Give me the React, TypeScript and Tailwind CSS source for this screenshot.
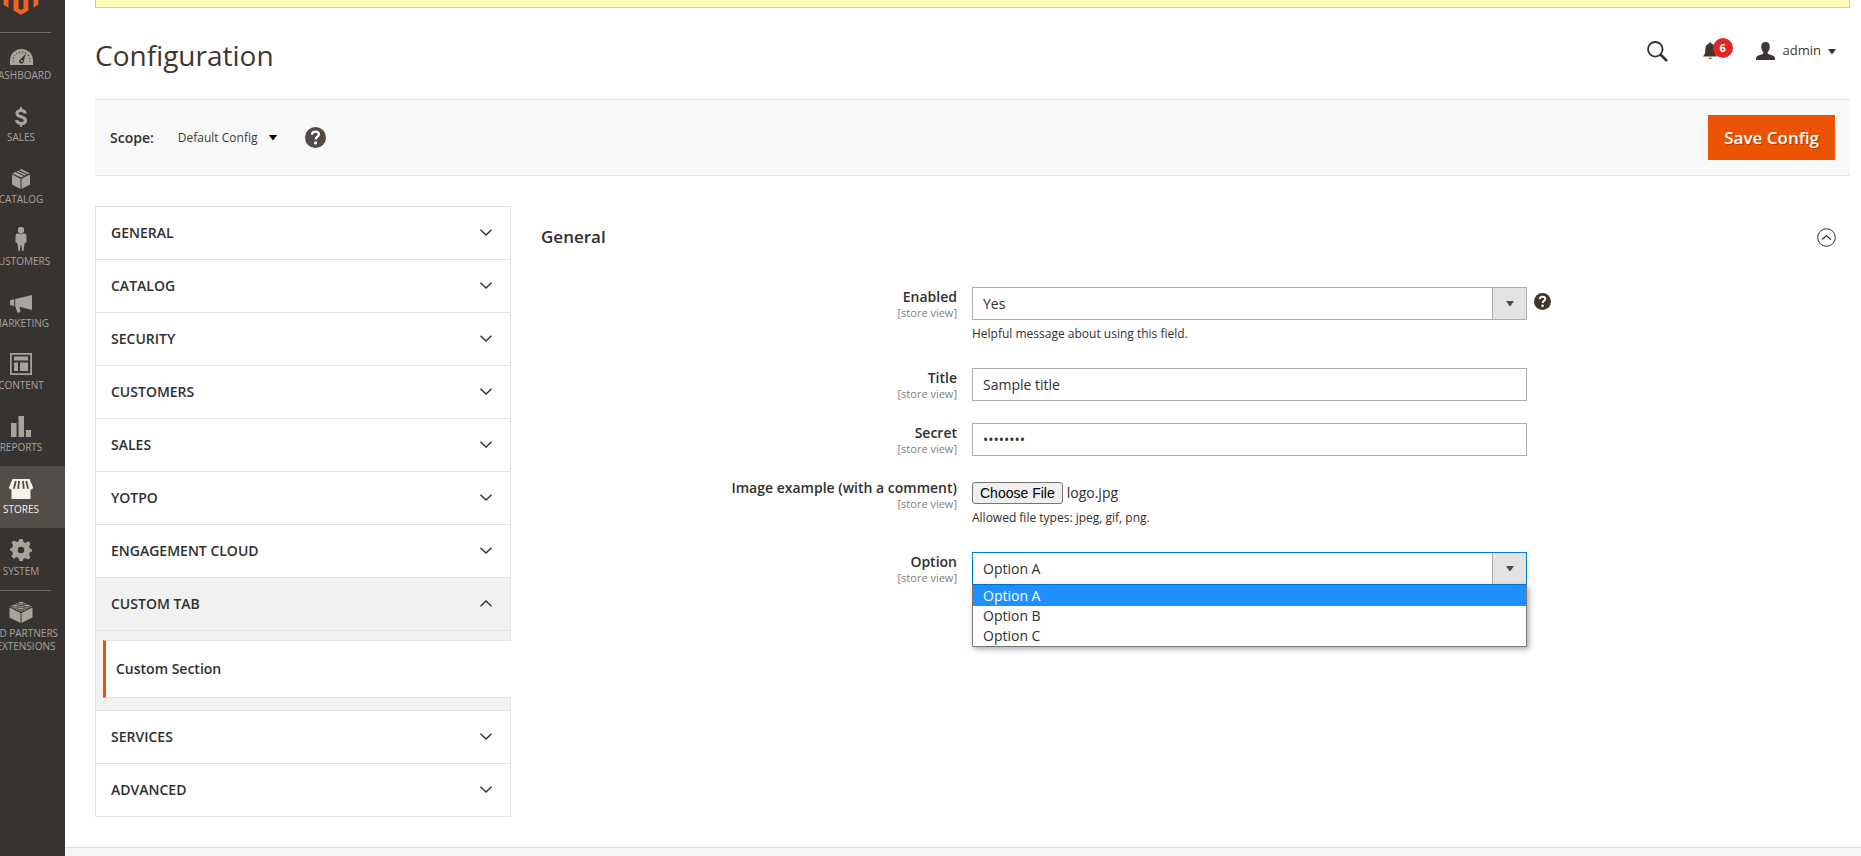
import { useRef } from 'react';
import type { ReactNode } from 'react';

const MENU: { label: string; icon: ReactNode; active?: boolean; divided?: boolean }[] = [
  {
    label: 'Dashboard',
    divided: true,
    icon: (
      <svg width="23" height="16" viewBox="0 0 23 16" fill="currentColor">
        <path d="M0 16v-4.500a11.500 11.500 0 0 1 23 0V16z" />
        <path d="M3.200 12.500A8.500 8.500 0 0 1 5 6.200M6.300 4.800A8.500 8.500 0 0 1 16.700 4.800M18 6.200a8.500 8.500 0 0 1 1.800 6.300" fill="none" stroke="#373330" strokeWidth="1.100" strokeDasharray="1.100 1.900" />
        <path d="M16 4.500l-2.400 8.300a2.300 2.300 0 1 1-3-2.600z" fill="#373330" />
        <circle cx="11.800" cy="12" r="1" />
      </svg>
    ),
  },
  {
    label: 'Sales',
    icon: (
      <svg width="12" height="20" viewBox="0 0 12 20" fill="none" stroke="currentColor">
        <path d="M6 0v3M6 17v3" strokeWidth="2" />
        <path d="M10.300 6.600C10 4.500 8.500 3.500 6.100 3.500 3.600 3.500 2 4.600 2 6.500c0 4.300 8.500 2.300 8.500 6.800 0 2-1.700 3.200-4.300 3.200-2.700 0-4.300-1.200-4.600-3.400" strokeWidth="3.200" />
      </svg>
    ),
  },
  {
    label: 'Catalog',
    icon: (
      <svg width="18" height="20" viewBox="0 0 18 20" fill="currentColor">
        <path d="M0 5.600l8.500 4.200V20L0 15.400zM18 5.600L9.500 9.800V20l8.500-4.600z" />
        <path d="M.4 4.600L3.300 3.100l8.500 4L9 8.600zM4.300 2.600L6 1.700l8.500 4-1.700.9zM7.100 1.100L9.200 0l8.500 4.200-2.100 1z" />
      </svg>
    ),
  },
  {
    label: 'Customers',
    icon: (
      <svg width="12" height="24" viewBox="0 0 12 24" fill="currentColor">
        <circle cx="6" cy="3" r="3.200" />
        <path d="M2.500 6.500h7Q11.500 6.800 11.500 9v6l-2 1.500L8.500 24H7.200L6.400 18h-.8L4.800 24H3.500l-1-7.500-2-1.500V9q0-2.200 2-2.500z" />
      </svg>
    ),
  },
  {
    label: 'Marketing',
    icon: (
      <svg width="22" height="18" viewBox="0 0 22 18" fill="currentColor">
        <path d="M22 0v15L9.500 11.800 10.600 17 7.700 18 5.200 11.300V4z" />
        <path d="M0 5.200l4.200-1v7L0 10z" />
      </svg>
    ),
  },
  {
    label: 'Content',
    icon: (
      <svg width="22" height="22" viewBox="0 0 22 22" fill="currentColor">
        <path fillRule="evenodd" d="M0 0h22v22H0zM1.700 1.700v18.600h18.600V1.700z" />
        <path d="M4 3.500h14v4H4zM4 9.500h4V18H4zM10 9.500h8V18h-8z" />
      </svg>
    ),
  },
  {
    label: 'Reports',
    icon: (
      <svg width="20" height="21" viewBox="0 0 20 21" fill="currentColor">
        <path d="M0 7h5.500v14H0zM7.500 0H13v21H7.500zM14.800 14H20v7h-5.200z" />
      </svg>
    ),
  },
  {
    label: 'Stores',
    active: true,
    icon: (
      <svg width="24" height="20" viewBox="0 0 24 20" fill="currentColor">
        <path d="M2.500 10h19v10h-19z" />
        <path d="M3.500 0h17L24 8.200Q23.800 10.600 22 10.600H2Q.2 10.600 0 8.200z" />
        <path d="M6.800 2L4.900 9.800M10 2l-.8 7.800M14 2l.8 7.800M17.200 2l1.900 7.800" stroke="#524d49" strokeWidth="1.800" />
      </svg>
    ),
  },
  {
    label: 'System',
    icon: (
      <svg width="22" height="22" viewBox="-11 -11 22 22" fill="currentColor">
        <path
          fillRule="evenodd"
          d="M-1.600-11h3.200l.9 3.100 1.900.8 2.900-1.600 2.300 2.300-1.600 2.900.8 1.900 2.100.9v2.200l-2.200 1-.8 1.900 1.600 2.900-2.300 2.300-2.900-1.600-1.900.8L1.600 11h-3.200l-.9-3.100-1.900-.8-2.900 1.600-2.300-2.300 1.600-2.900-.8-1.900-2.100-1v-2.200l2.200-.9.800-1.900-1.600-2.900 2.300-2.300 2.900 1.600 1.900-.8zM0-3.300a3.300 3.300 0 1 0 0 6.600 3.300 3.300 0 0 0 0-6.600z"
        />
      </svg>
    ),
  },
  {
    label: 'Find Partners & Extensions',
    divided: true,
    icon: (
      <svg width="24" height="22" viewBox="0 0 24 22" fill="currentColor">
        <path d="M.5 6.500L11.500 12v10L.5 16.500zM23.500 6.500L12.500 12v10l11-5.500z" />
        <path d="M12 .5l11 5L12 11 1 5.500z" />
        <g stroke="#373330" strokeWidth=".8">
          <path d="M9 1.800v1.600c0 1.600 6 1.600 6 0V1.800M3 4.600v1.600c0 1.600 6 1.600 6 0V4.600M15 4.600v1.600c0 1.600 6 1.600 6 0V4.600M9 7.400V9c0 1.600 6 1.600 6 0V7.400" />
          <ellipse cx="12" cy="1.800" rx="3" ry="1.400" />
          <ellipse cx="6" cy="4.600" rx="3" ry="1.400" />
          <ellipse cx="18" cy="4.600" rx="3" ry="1.400" />
          <ellipse cx="12" cy="7.400" rx="3" ry="1.400" />
        </g>
      </svg>
    ),
  },
];

const TABS = [
  { title: 'General' },
  { title: 'Catalog' },
  { title: 'Security' },
  { title: 'Customers' },
  { title: 'Sales' },
  { title: 'Yotpo' },
  { title: 'Engagement Cloud' },
  { title: 'Custom Tab', sections: ['Custom Section'] },
  { title: 'Services' },
  { title: 'Advanced' },
];

const OPTIONS = ['Option A', 'Option B', 'Option C'];

function Chevron({ up }: { up?: boolean }) {
  return (
    <svg width="12" height="7" viewBox="0 0 12 7" fill="none" stroke="#303030" strokeWidth="1.400">
      <path d={up ? 'M.5 6.300L6 1l5.500 5.300' : 'M.5.7L6 6 11.500.7'} />
    </svg>
  );
}

function Caret({ color = '#41362f' }: { color?: string }) {
  return (
    <svg width="8" height="5" viewBox="0 0 8 5" fill={color} className="shrink-0">
      <path d="M0 0h8L4.800 4.600a1 1 0 0 1-1.600 0z" />
    </svg>
  );
}

function HelpIcon({ size, color }: { size: number; color: string }) {
  return (
    <svg width={size} height={size} viewBox="0 0 21 21">
      <circle cx="10.500" cy="10.500" r="10.500" fill={color} />
      <path d="M7 7.600C7.100 5.600 8.500 4.600 10.500 4.600s3.400 1 3.400 2.700c0 2.300-3.200 2.400-3.200 5.200" fill="none" stroke="#fff" strokeWidth="2.400" />
      <circle cx="10.600" cy="15.900" r="1.600" fill="#fff" />
    </svg>
  );
}

function Sidebar() {
  return (
    <nav className="w-[65px] shrink-0 overflow-hidden bg-[#373330] text-[#a8a39d]">
      <div className="-ml-[23px] w-[88px]">
        <a href="#" aria-label="Magento" className="flex h-8 justify-center">
          <svg width="36" height="15" viewBox="0 0 36 15" fill="#f26322">
            <path d="M.7 0h4.800v7.600L.7 5zM30.500 0h4.800v5l-4.800 2.600zM10.600 0h4.900v8.600l2.500 1.300 2.500-1.300V0h4.900v10.600L18 14.800l-7.400-4.200z" />
          </svg>
        </a>
        <ul>
          {MENU.map((m) => (
            <li key={m.label} className="relative">
              {m.divided && <span className="absolute top-0 right-[14px] left-[14px] h-px bg-[#736963]" />}
              <a
                href="#"
                className={`flex min-h-[62px] flex-col items-center ${m.active ? 'bg-[#524d49] text-[#f7f3eb]' : ''}`}
              >
                <span className="flex h-[33px] items-end">{m.icon}</span>
                <span className="mt-1 max-w-[80px] text-center text-[10px] leading-[13px] uppercase">{m.label}</span>
              </a>
            </li>
          ))}
        </ul>
      </div>
    </nav>
  );
}

function Header() {
  return (
    <header className="flex items-center justify-between pt-[27px] pr-[14px] pb-6">
      <h1 className="text-[28px] leading-10 text-[#41362f]">Configuration</h1>
      <div className="-mt-2 flex items-center">
        <button type="button" aria-label="Search" className="mr-[35px]">
          <svg width="21" height="21" viewBox="0 0 21 21" fill="none" stroke="#303030">
            <circle cx="8.300" cy="8.300" r="7.300" strokeWidth="1.800" />
            <path d="M13.500 13.500l6.500 6.500" strokeWidth="2.500" />
          </svg>
        </button>
        <button type="button" aria-label="Notifications" className="relative mr-[39px]">
          <svg width="14" height="18" viewBox="0 0 14 18" fill="#41362f">
            <path d="M6 1.500a1.200 1.200 0 0 1 2.400 0C11 2.200 11.800 4.500 11.800 8c0 3.400.8 4.500 2.200 6.500H0C1.800 12.500 2.300 11.400 2.300 8 2.300 4.500 3.500 2.200 6 1.500zM5.200 15.800h4c-.4 1.400-3.600 1.400-4 0z" />
          </svg>
          <span className="absolute -top-1 left-[10px] flex size-5 items-center justify-center rounded-full bg-[#e22626] text-[11px] font-bold text-white">
            6
          </span>
        </button>
        <button type="button" className="flex items-center text-[13px] text-[#41362f]">
          <svg width="19" height="18" viewBox="0 0 19 18" fill="#41362f" className="mr-2">
            <path d="M9.500 0c2.900 0 4.300 1.800 4.300 4.600 0 2.400-.8 4.300-2.100 5.400v1.600c1 .9 4 1.500 5.900 2.400 1.100.5 1.400 1.900 1.400 4H0c0-2.100.3-3.500 1.400-4 1.900-.9 4.900-1.500 5.900-2.400V10C6 8.900 5.200 7 5.200 4.600 5.200 1.800 6.600 0 9.500 0z" />
          </svg>
          admin
          <span className="ml-[7px]">
            <Caret />
          </span>
        </button>
      </div>
    </header>
  );
}

function ConfigTabs() {
  return (
    <aside className="w-[416px] shrink-0 border-b border-[#e3e3e3]">
      {TABS.map((t) => (
        <div key={t.title} className={`border-x border-t border-[#e3e3e3] ${t.sections ? 'bg-[#f1f1f1]' : ''}`}>
          <button
            type="button"
            className="flex h-[52px] w-full items-center justify-between pr-[18px] pb-px pl-[15px] text-[14px] font-semibold text-[#303030] uppercase"
          >
            {t.title}
            <Chevron up={!!t.sections} />
          </button>
          {t.sections && (
            <ul className="border-t border-[#e3e3e3] pt-[9px] pb-3">
              {t.sections.map((s) => (
                <li key={s} className="-mr-px ml-[7px]">
                  <a
                    href="#"
                    className="flex h-[58px] items-center border-y border-l-3 border-y-[#e3e3e3] border-l-[#eb5202] bg-white pb-px pl-[10px] text-[14px] font-semibold text-[#303030]"
                  >
                    {s}
                  </a>
                </li>
              ))}
            </ul>
          )}
        </div>
      ))}
    </aside>
  );
}

function Field({ id, label, note, help, children }: { id: string; label: string; note?: string; help?: boolean; children: ReactNode }) {
  return (
    <div className="mb-[22px] grid grid-cols-[416fr_555fr_294fr] gap-x-[15px]">
      <label htmlFor={id} className="pt-px text-right text-[14px] leading-[18px] font-semibold text-[#303030]">
        {label}
        <span className="block text-[11px] leading-[14px] font-normal text-[#808080]">[store view]</span>
      </label>
      <div>
        {children}
        {note && <p className="pt-1 pb-[2px] text-[12px] leading-5 text-[#303030]">{note}</p>}
      </div>
      {help && (
        <button type="button" aria-label="Help" className="-ml-2 mt-[6px] self-start justify-self-start">
          <HelpIcon size={17} color="#41362f" />
        </button>
      )}
    </div>
  );
}

function SelectBox({ id, options, open }: { id: string; options: string[]; open?: boolean }) {
  return (
    <div className="relative">
      <select
        id={id}
        className={`block h-[33px] w-full appearance-none border bg-white px-[10px] text-[14px] text-[#303030] ${open ? 'border-[#007bdb]' : 'border-[#adadad]'}`}
      >
        {options.map((o) => (
          <option key={o}>{o}</option>
        ))}
      </select>
      <span className="pointer-events-none absolute top-px right-px bottom-px flex w-[34px] items-center justify-center border-l border-[#adadad] bg-[#e3e3e3]">
        <Caret color="#514943" />
      </span>
      {open && (
        <ul role="listbox" className="absolute inset-x-0 top-full border border-[#767676] bg-white text-[14px] leading-5 text-[#303030] shadow-[2px_2px_6px_rgba(0,0,0,0.35)]">
          {options.map((o, i) => (
            <li key={o} role="option" aria-selected={i === 0} className={`px-[10px] ${i === 0 ? 'bg-[#1e90ff] text-white' : ''}`}>
              {o}
            </li>
          ))}
        </ul>
      )}
    </div>
  );
}

export default function App() {
  const fileRef = useRef<HTMLInputElement>(null);

  return (
    <div className="flex min-h-screen bg-white font-['Open_Sans',sans-serif] text-[#303030]">
      <Sidebar />
      <div className="flex min-w-0 flex-1 flex-col">
        <main className="pr-[11px] pb-[30px] pl-[30px]">
          <div className="h-2 border-x border-b border-[#c9c9b4] bg-[#fffbbb]" />
          <Header />
          <div className="flex items-center justify-between border-y border-[#e3e3e3] bg-[#f8f8f8] p-[15px]">
            <div className="flex items-center">
              <span className="text-[14px] font-semibold">Scope:</span>
              <button type="button" className="ml-6 flex items-center gap-3 text-[12px] text-[#41362f]">
                Default Config
                <Caret color="#000" />
              </button>
              <button type="button" aria-label="What is this?" className="ml-7">
                <HelpIcon size={21} color="#514943" />
              </button>
            </div>
            <button type="button" className="h-[45px] bg-[#eb5202] px-4 text-[17px] font-semibold text-white [text-shadow:1px_1px_0_rgba(0,0,0,0.25)]">
              Save Config
            </button>
          </div>

          <div className="mt-[30px] flex gap-[30px]">
            <ConfigTabs />
            <section className="min-w-0 flex-1 pr-[14px]">
              <div className="flex items-center justify-between pt-[18px] pb-[37px]">
                <h2 className="text-[17px] leading-[26px] font-semibold">General</h2>
                <button type="button" aria-label="Collapse General">
                  <svg width="19" height="19" viewBox="0 0 19 19" fill="none" stroke="#303030">
                    <circle cx="9.500" cy="9.500" r="8.800" strokeWidth="1" />
                    <path d="M5 11.500l4.500-3.800 4.500 3.800" strokeWidth="1.200" />
                  </svg>
                </button>
              </div>
              <form>
                <Field id="enabled" label="Enabled" note="Helpful message about using this field." help>
                  <SelectBox id="enabled" options={['Yes', 'No']} />
                </Field>
                <Field id="title" label="Title">
                  <input id="title" type="text" defaultValue="Sample title" className="block h-[33px] w-full border border-[#adadad] px-[10px] text-[14px]" />
                </Field>
                <Field id="secret" label="Secret">
                  <input id="secret" type="password" defaultValue="password" className="block h-[33px] w-full border border-[#adadad] px-[10px] text-[14px]" />
                </Field>
                <Field id="image" label="Image example (with a comment)" note="Allowed file types: jpeg, gif, png.">
                  <div className="flex items-center pt-1 text-[14px] leading-5">
                    <input id="image" ref={fileRef} type="file" className="hidden" />
                    <button
                      type="button"
                      onClick={() => fileRef.current?.click()}
                      className="mr-1 rounded-[3px] border border-[#767676] bg-[#efefef] px-[7px] font-['Liberation_Sans',sans-serif] text-[14px] leading-5 text-black"
                    >
                      Choose File
                    </button>
                    logo.jpg
                  </div>
                </Field>
                <Field id="option" label="Option">
                  <SelectBox id="option" options={OPTIONS} open />
                </Field>
              </form>
            </section>
          </div>
        </main>
        <footer className="flex-1 border-t border-[#dcdcdc] bg-[#f5f5f5]" />
      </div>
    </div>
  );
}
